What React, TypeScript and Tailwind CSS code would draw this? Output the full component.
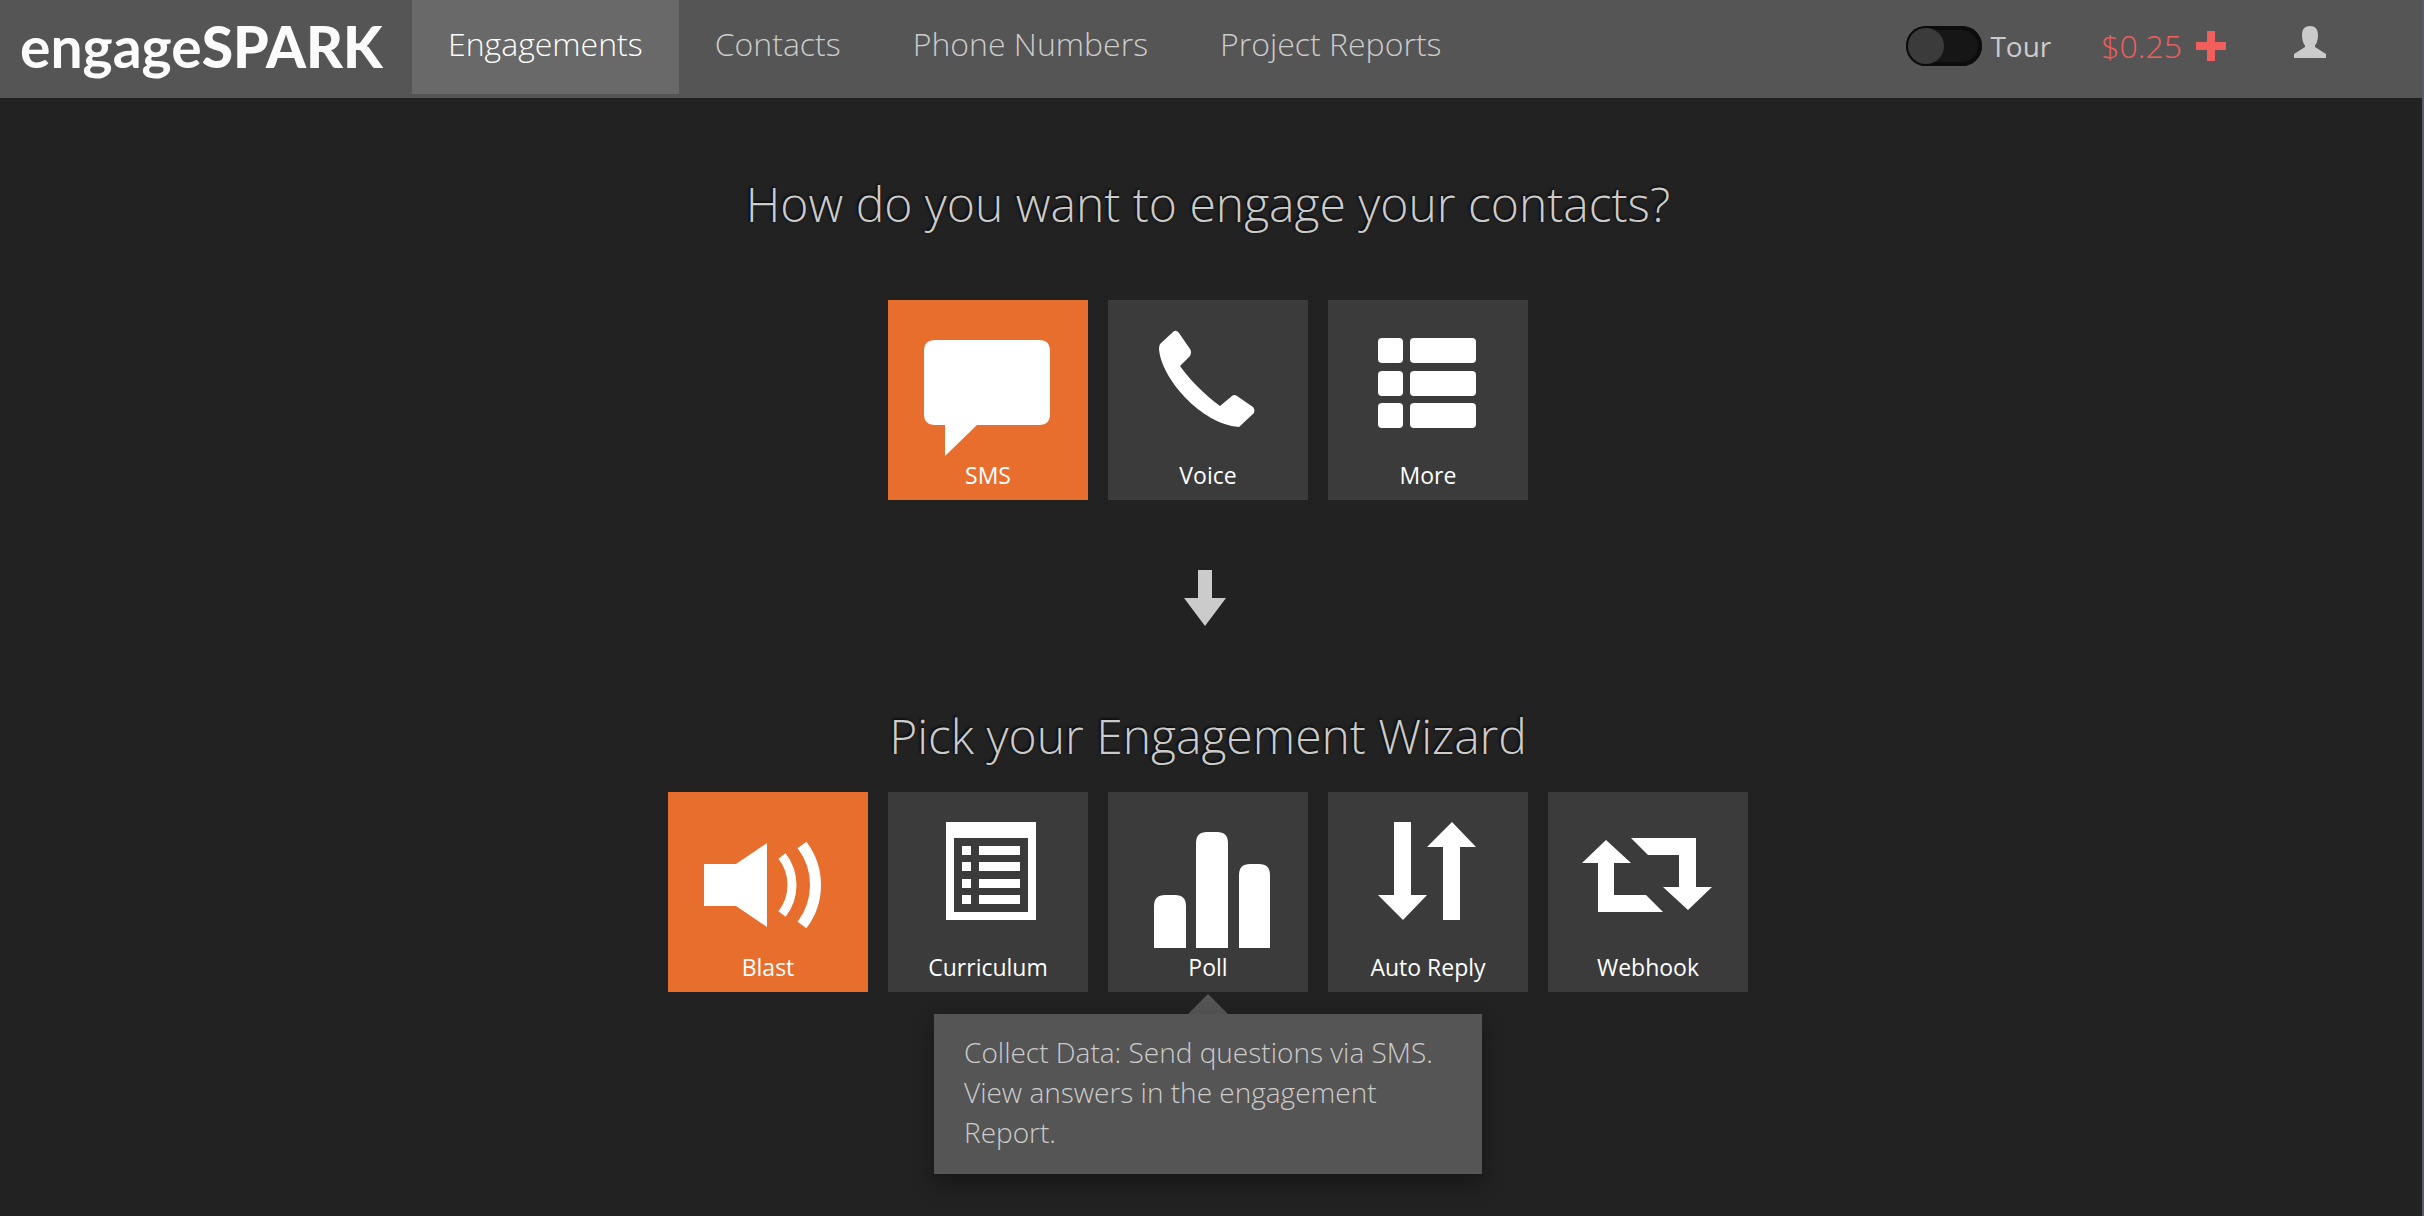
import React, { useState } from "react";

type Tile = { label: string; icon: React.ReactNode };

const engageTiles: Tile[] = [
  {
    label: "SMS",
    icon: (
      <path d="M47 40H151Q162 40 162 51V114Q162 125 151 125H89L57 156V125H47Q36 125 36 114V51Q36 40 47 40Z" />
    ),
  },
  {
    label: "Voice",
    icon: (
      <path d="M65 32L52 44Q51 46 51 49C53 78 93 124 131 127L146 113Q147 109 145 107L129 96Q126 94 124 96L112 106C96 94 82 80 72 66L82 56Q84 52 82 49L71 33Q68 29 65 32Z" />
    ),
  },
  {
    label: "More",
    icon: (
      <>
        <rect x="50" y="38" width="25" height="25" rx="4" />
        <rect x="82" y="38" width="66" height="25" rx="4" />
        <rect x="50" y="71" width="25" height="25" rx="4" />
        <rect x="82" y="71" width="66" height="25" rx="4" />
        <rect x="50" y="103" width="25" height="25" rx="4" />
        <rect x="82" y="103" width="66" height="25" rx="4" />
      </>
    ),
  },
];

const wizardTiles: Tile[] = [
  {
    label: "Blast",
    icon: (
      <>
        <path d="M36 72H68L99 51V135L68 114H36Z" />
        <path d="M114 64A47 47 0 0 1 114 122" fill="none" stroke="#fff" strokeWidth="9" />
        <path d="M134 53A66 66 0 0 1 134 133" fill="none" stroke="#fff" strokeWidth="11" />
      </>
    ),
  },
  {
    label: "Curriculum",
    icon: (
      <path
        fillRule="evenodd"
        d="M58 30H148V128H58ZM66 46V120H140V46ZM74 54H83V63H74ZM91 54H132V63H91ZM74 70H83V79H74ZM91 70H132V79H91ZM74 87H83V96H74ZM91 87H132V96H91ZM74 103H83V112H74ZM91 103H132V112H91Z"
      />
    ),
  },
  {
    label: "Poll",
    icon: (
      <path d="M46 156V114Q46 103 57 103H67Q78 103 78 114V156ZM88 156V51Q88 40 99 40H109Q120 40 120 51V156ZM131 156V83Q131 72 142 72H151Q162 72 162 83V156Z" />
    ),
  },
  {
    label: "Auto Reply",
    icon: (
      <path d="M66 30H83V103H99L75 128L50 103H66ZM124 30L148 55H132V128H115V55H99Z" />
    ),
  },
  {
    label: "Webhook",
    icon: (
      <path d="M58 48L83 71H66V103H98L115 120H50V71H34ZM83 46H148V95H164L140 118L115 95H131V63H100Z" />
    ),
  },
];

const navItems = ["Engagements", "Contacts", "Phone Numbers", "Project Reports"];

function TileButton({
  tile,
  active,
  onSelect,
}: {
  tile: Tile;
  active: boolean;
  onSelect: () => void;
}) {
  return (
    <button
      type="button"
      aria-pressed={active}
      onClick={onSelect}
      className={`grid size-[200px] cursor-pointer text-white ${active ? "bg-[#e76e2c]" : "bg-[#3b3b3b]"}`}
    >
      <svg viewBox="0 0 200 200" aria-hidden="true" className="col-start-1 row-start-1 size-full fill-white">
        {tile.icon}
      </svg>
      <span className="col-start-1 row-start-1 self-end pb-2 text-center text-[23px] leading-[34px]">
        {tile.label}
      </span>
    </button>
  );
}

export default function App() {
  const [channel, setChannel] = useState("SMS");
  const [wizard, setWizard] = useState("Blast");

  return (
    <div className="flex min-h-screen flex-col border-r-2 border-[#5b5c66] bg-[#222222] font-['Open_Sans',sans-serif] text-[#cbcbcb]">
      <header className="flex h-[98px] items-start bg-[#555555]">
        <a
          href="#home"
          className="w-[412px] shrink-0 pt-2.5 pl-5 font-['Lato',sans-serif] text-[57px] leading-[72px] whitespace-nowrap text-[#fbfbfb]"
        >
          <span className="font-bold">engage</span>
          <span className="font-black">SPARK</span>
        </a>
        <nav className="flex text-[32px] font-light">
          {navItems.map((item, i) => (
            <a
              key={item}
              href="#nav"
              className={`h-[94px] px-9 leading-[88px] whitespace-nowrap ${i === 0 ? "bg-[#696969] text-white" : ""}`}
            >
              {item}
            </a>
          ))}
        </nav>
        <div className="ml-auto flex h-[92px] items-center pr-24">
          <label className="flex cursor-pointer items-center gap-2 text-[28px]">
            <span className="flex h-10 w-[76px] rounded-full bg-[#161616] p-0.5 ring-4 ring-[#0c0c0c] ring-inset has-checked:justify-end">
              <input type="checkbox" className="size-9 appearance-none rounded-full bg-[#3b3b3b]" />
            </span>
            Tour
          </label>
          <a href="#billing" className="ml-[50px] flex items-center gap-3.5 text-[32px] font-light text-[#f05f5c]">
            $0.25
            <svg viewBox="0 0 30 30" aria-hidden="true" className="size-[30px] fill-current">
              <path d="M11 0H19V11H30V19H19V30H11V19H0V11H11Z" />
            </svg>
          </a>
          <button type="button" aria-label="Account" className="ml-[68px] pb-2">
            <svg viewBox="0 0 32 32" aria-hidden="true" className="size-8 fill-[#cbcbcb]">
              <path d="M16 0C21 0 24 3 24 9C24 14 22.500 18 21 19.500V21L32 28V32H0V28L11 21V19.500C9.500 18 8 14 8 9C8 3 11 0 16 0Z" />
            </svg>
          </button>
        </div>
      </header>

      <main className="flex flex-col items-center pr-1.5">
        <h1 className="mt-[72px] text-[48px] leading-[68px] font-light text-shadow-[-1px_-1px_3px_#000000]">
          How do you want to engage your contacts?
        </h1>
        <div className="mt-[62px] flex gap-5">
          {engageTiles.map((t) => (
            <TileButton key={t.label} tile={t} active={t.label === channel} onSelect={() => setChannel(t.label)} />
          ))}
        </div>
        <svg viewBox="0 0 42 56" aria-hidden="true" className="mt-[70px] mr-1.5 h-14 w-[42px] fill-[#cbcbcb]">
          <path d="M14 0H28V28H42L21 56L0 28H14Z" />
        </svg>
        <h2 className="mt-[76px] text-[48px] leading-[68px] font-light text-shadow-[-1px_-1px_3px_#000000]">
          Pick your Engagement Wizard
        </h2>
        <div className="mt-[22px] flex gap-5">
          {wizardTiles.map((t) => (
            <TileButton key={t.label} tile={t} active={t.label === wizard} onSelect={() => setWizard(t.label)} />
          ))}
        </div>
        <div role="tooltip" className="mt-0.5 flex flex-col items-center">
          <svg viewBox="0 0 40 20" aria-hidden="true" className="h-5 w-10 fill-[#555555]">
            <path d="M20 0L40 20H0Z" />
          </svg>
          <p className="w-[548px] bg-[#555555] px-[30px] pt-[18px] pb-[22px] text-[28px] leading-10 font-light shadow-[0_10px_20px_rgba(0,0,0,0.35)]">
            Collect Data: Send questions via SMS. View answers in the engagement Report.
          </p>
        </div>
      </main>
    </div>
  );
}
